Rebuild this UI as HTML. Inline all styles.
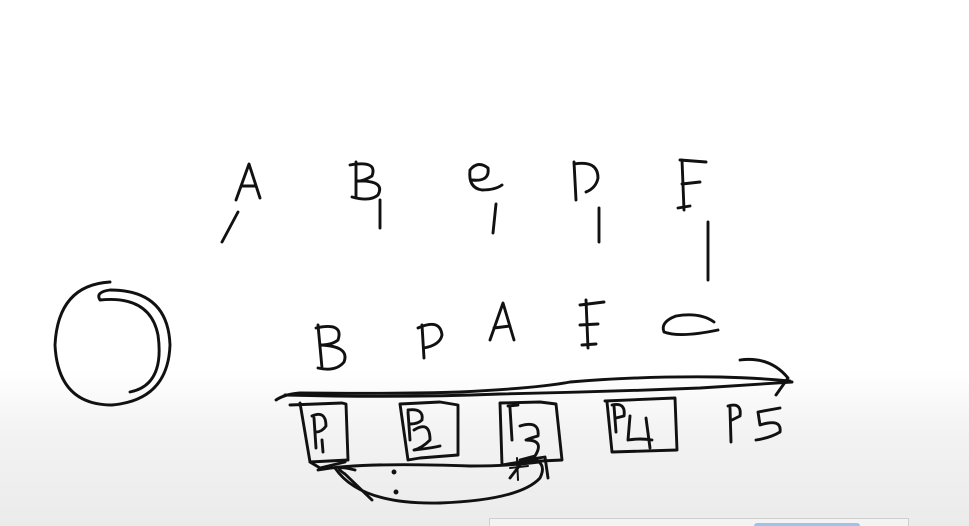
<!DOCTYPE html>
<html><head><meta charset="utf-8"><style>
html,body{margin:0;padding:0;width:969px;height:526px;overflow:hidden;}
body{background:linear-gradient(#fff 0,#fff 370px,#f3f3f3 430px,#ebebeb 526px);position:relative;}
svg{position:absolute;left:0;top:0}
.box{position:absolute;left:489px;top:518px;width:418px;height:10px;border:1px solid #cfcfcf;background:#f3f3f3;}
.bar{position:absolute;left:754px;top:523px;width:106px;height:6px;background:#9cc3ea;border-radius:3px;}
</style></head><body>
<svg width="969" height="526" viewBox="0 0 969 526" fill="none" stroke="#111" stroke-width="2.9" stroke-linecap="round" stroke-linejoin="round">
<path d="M236 200 L249 164 L260 198 M241 186 L256 186"/>
<path d="M238 212 L222 242"/>
<path d="M356 162 L356 198 M350 165 Q378 160 372 176 Q362 182 356 181 Q386 180 378 195 Q370 202 352 197"/>
<path d="M380 200 L380 228"/>
<path d="M472 180 Q490 182 488 168 Q478 160 470 170 Q468 188 482 190 Q495 190 502 185"/>
<path d="M496 204 L493 233"/>
<path d="M574 162 L576 200 M574 164 Q598 160 598 178 Q596 188 586 192"/>
<path d="M599 208 L599 242"/>
<path d="M680 160 L706 162 M682 160 L684 210 M682 184 L700 182 M678 208 L690 206"/>
<path d="M708 222 L708 280"/>
<path d="M110 282 Q58 285 55 345 Q58 405 112 405 Q168 400 170 345 Q168 290 110 290 Q95 292 100 300 Q150 295 158 335 Q165 385 130 392"/>
<path d="M318 325 L322 368 M316 328 Q344 322 338 340 Q332 345 320 345 Q350 346 344 362 Q336 372 318 368"/>
<path d="M422 325 L424 358 M418 328 Q440 318 442 335 Q440 345 424 348"/>
<path d="M490 340 L503 303 L514 340 M494 328 L510 326"/>
<path d="M586 300 L588 348 M580 305 L604 302 M580 325 L598 324 M582 345 L596 344"/>
<path d="M714 322 Q700 312 676 316 Q660 322 664 332 Q680 338 718 330"/>
<path d="M276 400 Q285 394 300 393 Q400 394 460 392 Q540 388 570 382 Q640 376 720 377 Q760 378 790 381"/>
<path d="M285 395 Q400 398 500 394 Q600 392 700 388 Q760 384 792 382"/>
<path d="M740 360 Q770 356 788 378 L776 395"/>
<path d="M290 405 L342 403 L346 404 L348 460 L310 462 L300 403"/>
<path d="M310 462 L320 468 L345 462"/>
<path d="M400 404 L440 402 L458 405 L458 455 L420 458 L408 460 L400 404"/>
<path d="M500 403 L540 402 L556 404 L562 460 L520 462 L502 465 L500 403"/>
<path d="M605 401 L675 398 L677 450 L612 452 L607 402"/>
<path d="M314 418 L316 448 M312 416 Q326 410 326 426 Q322 432 316 432 M322 440 L323 452"/>
<path d="M408 412 L410 440 M408 410 Q424 408 422 420 Q418 424 410 424 M414 430 Q430 420 430 440 Q422 448 414 450 Q432 448 440 446"/>
<path d="M510 408 L512 440 M508 406 L518 405 M520 426 Q540 420 538 436 Q530 438 526 440 Q545 440 535 456 L520 460"/>
<path d="M614 406 L616 432 M612 405 Q626 402 624 416 L616 418 M630 416 L628 440 Q640 438 652 440 M646 418 L650 448"/>
<path d="M730 408 L731 442 M728 406 Q742 402 740 416 L732 420 M780 408 L758 412 L760 425 Q782 418 780 432 Q770 438 756 440"/>
<path d="M318 470 Q360 462 470 466 Q510 466 540 462"/>
<path d="M335 468 Q360 505 440 503 Q520 500 540 478 Q548 462 530 458"/>
<path d="M355 470 Q330 464 345 474 L372 500"/>
<path d="M525 460 L545 457 L548 478 M520 465 L510 478"/>
<path d="M517 458 L518 480 M510 468 L528 466" stroke-width="2"/>
<circle cx="394" cy="472" r="1" fill="#111"/>
<circle cx="396" cy="492" r="1" fill="#111"/>
</svg>
<div class="box"></div><div class="bar"></div>
</body></html>
